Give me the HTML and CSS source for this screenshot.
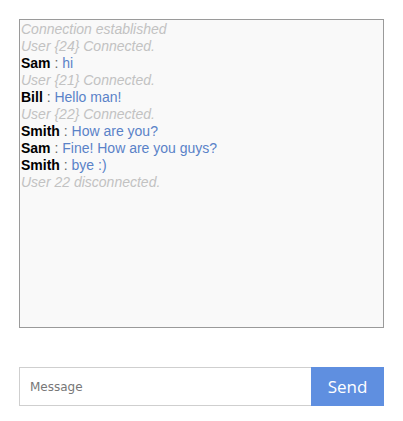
FILE: index.html
```html
<!DOCTYPE html>
<html lang="en">
<head>
    <meta charset="UTF-8">
    <meta name="viewport" content="width=device-width, initial-scale=1.0">
    <title>Chat</title>
    <link rel="stylesheet" href="styles.css">
</head>
<body>
    <!-- Chat log -->
    <div class="chat-log">
        <div class="notice">Connection established</div>
        <div class="notice">User {24} Connected.</div>
        <div class="msg"><span class="name">Sam</span> : <span class="text">hi</span></div>
        <div class="notice">User {21} Connected.</div>
        <div class="msg"><span class="name">Bill</span> : <span class="text">Hello man!</span></div>
        <div class="notice">User {22} Connected.</div>
        <div class="msg"><span class="name">Smith</span> : <span class="text">How are you?</span></div>
        <div class="msg"><span class="name">Sam</span> : <span class="text">Fine! How are you guys?</span></div>
        <div class="msg"><span class="name">Smith</span> : <span class="text">bye :)</span></div>
        <div class="notice">User 22 disconnected.</div>
    </div>

    <!-- Message form -->
    <form class="send-form">
        <input class="message" type="text" placeholder="Message">
        <button class="send" type="button">Send</button>
    </form>
</body>
</html>
```

FILE: styles.css
```css
/* Global Styling */
body {
    margin: 0;
    padding: 19px;
    width: 365px;
    font-family: "Liberation Sans", Arial, sans-serif;
    background: #fff;
}

/* Chat log box */
.chat-log {
    border: 1px solid #9a9a9a;
    background-color: #f9f9f9;
    padding: 1px 1px;
    box-sizing: border-box;
    height: 309px;
    font-size: 14px;
    line-height: 17px;
    overflow-y: auto;
}

.notice {
    color: #c2c2c2;
    font-style: italic;
}

.msg {
    color: #666;
}

.name {
    font-weight: bold;
    color: #000;
}

.text {
    color: #5a82c8;
}

/* Input row */
.send-form {
    display: flex;
    margin-top: 39px;
    height: 39px;
}

.message {
    flex: 1;
    margin: 0;
    border: 1px solid #cfcfcf;
    border-right: none;
    padding: 0 10px;
    font-family: "DejaVu Sans", Tahoma, sans-serif;
    font-size: 12px;
    color: #555;
    outline: none;
}

.message::placeholder {
    color: #777;
}

.send {
    width: 73px;
    margin: 0;
    border: none;
    background-color: #5f8fe0;
    color: #fff;
    font-family: "Open Sans", "Segoe UI", sans-serif;
    font-size: 17px;
    cursor: pointer;
}
```
